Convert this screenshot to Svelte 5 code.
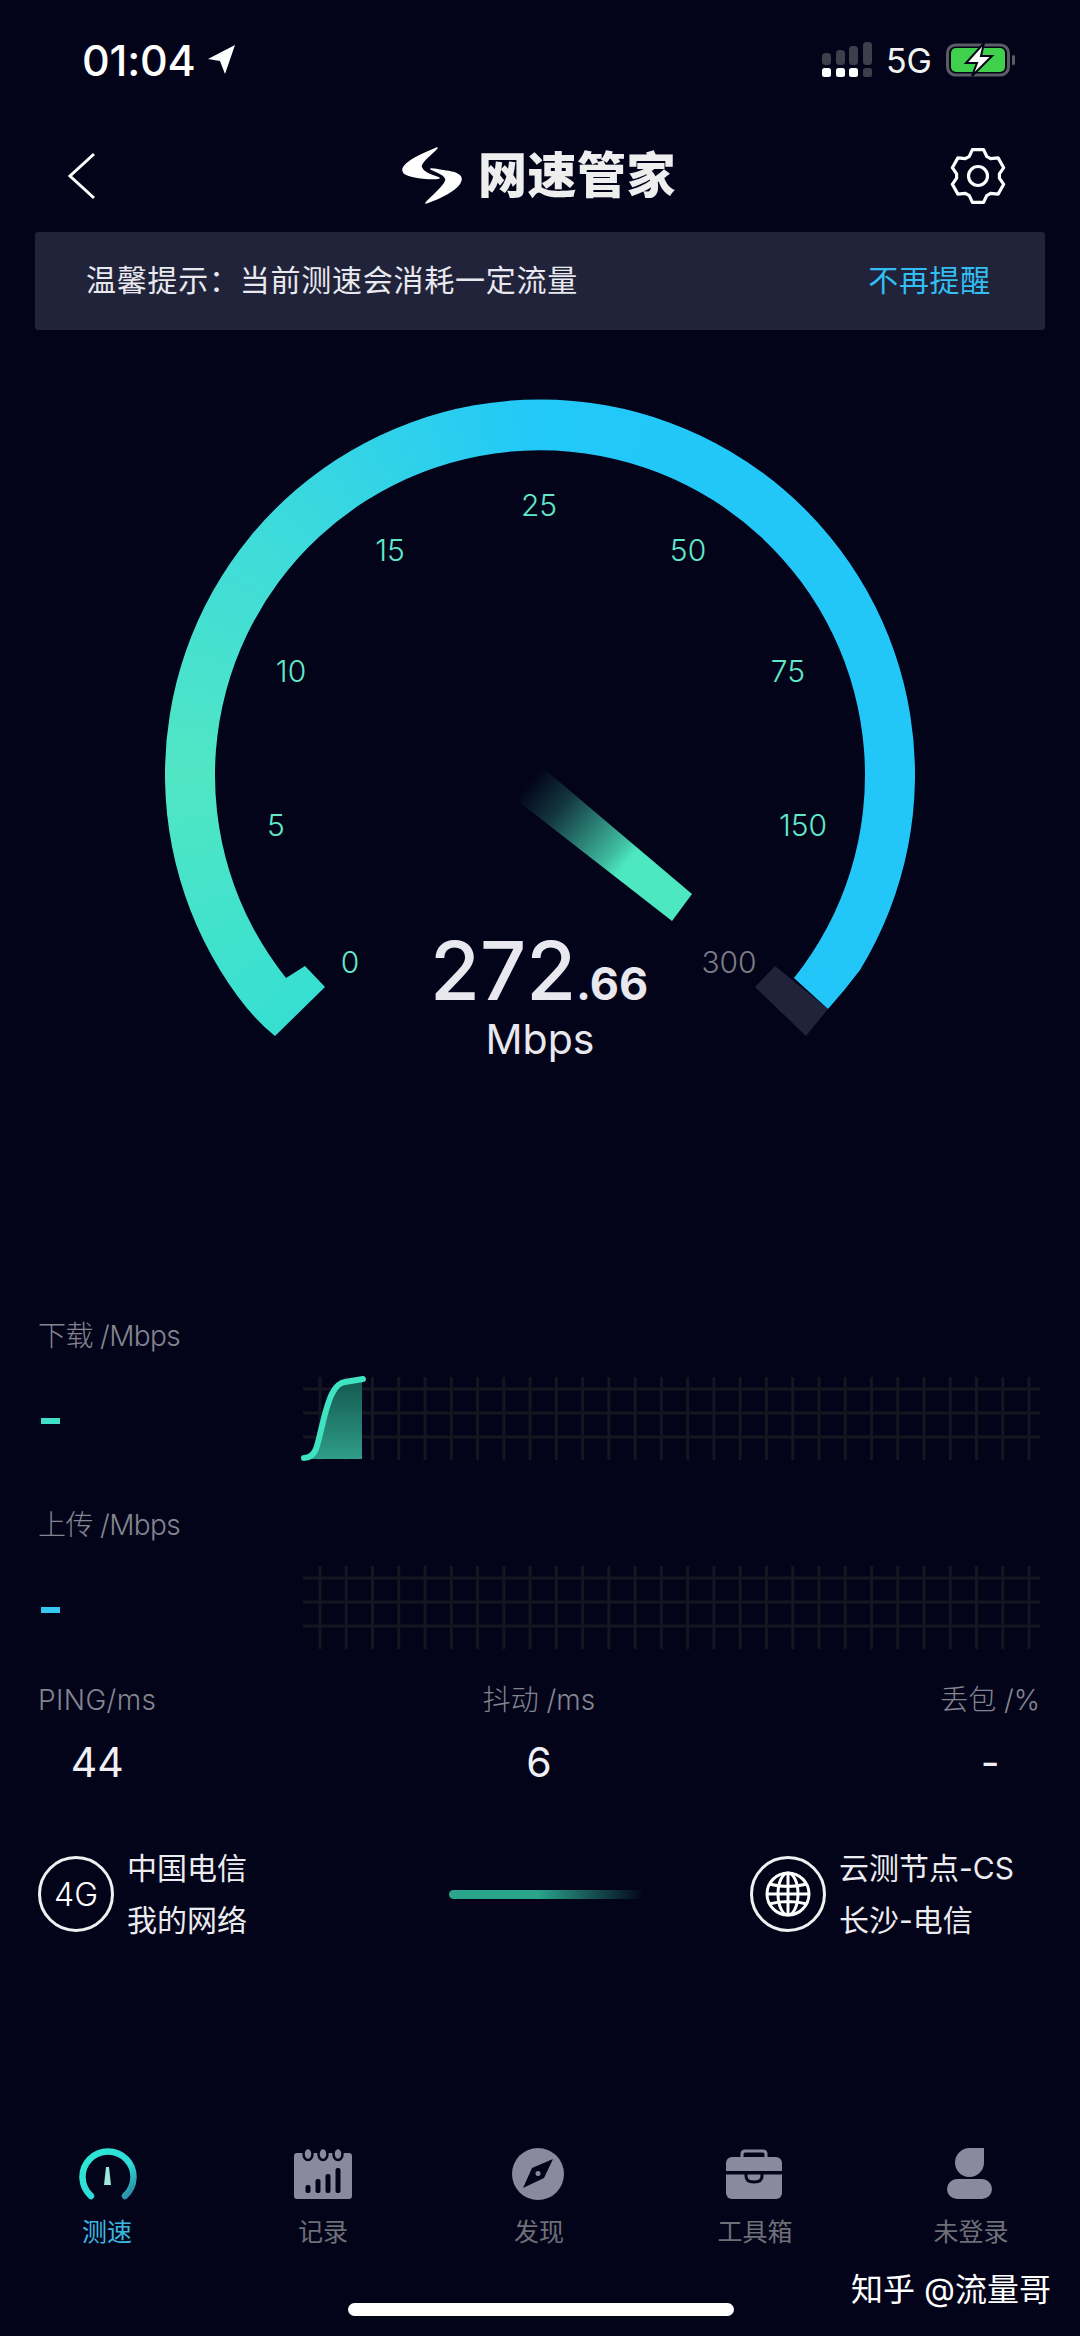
<script>
  const gridX = Array.from({ length: 28 }, (_, i) => 17 + i * 26.26);
  const gridY = [12, 36, 60];
  const ticks = [
    { t: '0', x: 350, y: 643 }, { t: '5', x: 276, y: 506 }, { t: '10', x: 291, y: 352 },
    { t: '15', x: 390, y: 231 }, { t: '25', x: 539, y: 186 }, { t: '50', x: 688, y: 231 },
    { t: '75', x: 788, y: 352 }, { t: '150', x: 803, y: 506 }
  ];
  const gearPts = [];
  for (let i = 0; i < 6; i++) {
    const a = (-90 + i * 60) * Math.PI / 180;
    const p = (r, d) => {
      const b = a + d * Math.PI / 180;
      return `${(30 + r * Math.cos(b)).toFixed(1)} ${(30 + r * Math.sin(b)).toFixed(1)}`;
    };
    gearPts.push(p(21.5, -24), p(27, -12), p(27, 12), p(21.5, 24));
  }
  const gear = 'M' + gearPts.join(' L') + ' Z';
  const bars = [
    { x: 12.5, y: 38 }, { x: 22.5, y: 32 }, { x: 32.5, y: 27 }, { x: 42.5, y: 21 }
  ];
  const signal = [
    { x: 0, y: 11, on: true }, { x: 14, y: 8, on: true }, { x: 27, y: 4, on: true }, { x: 41, y: 0, on: false }
  ];
</script>

<div class="page">
  <header class="status">
    <div class="time">
      <span>01:04</span>
      <svg width="28" height="30" viewBox="0 0 28 30"><path class="white" d="M27 0 L0 14 L12 16 L17 29 Z" /></svg>
    </div>
    <div class="sys">
      <svg width="50" height="36" viewBox="0 0 50 36">
        {#each signal as s}
          <rect class="dim" x={s.x} y={s.y} width="9" height={23 - s.y} rx="3.5" />
          <rect class={s.on ? 'white' : 'dim'} x={s.x} y="26" width="9" height="9" rx="2.5" />
        {/each}
      </svg>
      <span class="net">5G</span>
      <svg width="70" height="34" viewBox="0 0 70 34">
        <rect x="1.5" y="2" width="61" height="30" rx="8" fill="none" stroke="#5c5c64" stroke-width="3" />
        <rect x="5" y="5" width="54" height="24" rx="5" fill="#3fd04c" />
        <rect x="66" y="12" width="3" height="10" rx="1.5" fill="#5c5c64" />
        <path d="M38 0 L20 20 H31 L26 33 L46 13 H35 Z" fill="#fff" stroke="#03041a" stroke-width="2" />
      </svg>
    </div>
  </header>

  <nav class="nav">
    <svg width="30" height="48" viewBox="0 0 30 48"><path d="M27 2 L3 24 L27 46" fill="none" stroke="#fff" stroke-width="3" /></svg>
    <div class="brand">
      <svg width="62" height="58" viewBox="0 0 62 58">
        <path class="logo" d="M36 1 C24 6 4 14 2 22 C1 28 12 30 22 31 C28 31.5 34 32 38 31 C30 28 22 26 20 20 C19 14 30 8 36 1 Z" />
        <path class="logo" d="M25 56 C38 52 58 42 60 33 C61 27 52 25 44 24 C38 23 33 22 30 22 C36 25 44 27 45 32 C46 38 32 48 25 56 Z" />
      </svg>
      <span class="title">网速管家</span>
    </div>
    <svg width="60" height="60" viewBox="0 0 60 60">
      <path d={gear} fill="none" stroke="#fff" stroke-width="3.2" stroke-linejoin="round" />
      <circle cx="30" cy="30" r="9.5" fill="none" stroke="#fff" stroke-width="3.2" />
    </svg>
  </nav>

  <div class="banner">
    <span class="tip">温馨提示：当前测速会消耗一定流量</span>
    <span class="dismiss">不再提醒</span>
  </div>

  <section class="dial">
    <div class="ring"></div>
    <svg class="dial-art" width="1080" height="986" viewBox="0 0 1080 986">
      <defs>
        <linearGradient id="needle" gradientUnits="userSpaceOnUse" x1="530" y1="452" x2="682" y2="578">
          <stop offset="0" stop-color="#4de8c0" stop-opacity="0" />
          <stop offset="0.2" stop-color="#4de8c0" stop-opacity="0.22" />
          <stop offset="0.55" stop-color="#4de8c0" stop-opacity="0.8" />
          <stop offset="0.64" stop-color="#4de8c0" />
        </linearGradient>
      </defs>
      <polygon points="775,636 755,657 806,706 828,679" fill="#20233a" />
      <polygon points="692,564 672,591 514,468 543,438" fill="url(#needle)" />
      {#each ticks as k}
        <text class="tick" x={k.x} y={k.y} text-anchor="middle">{k.t}</text>
      {/each}
      <text class="tick off" x="729" y="643" text-anchor="middle">300</text>
      <text class="speed" x="430" y="670">272<tspan class="frac">.66</tspan></text>
      <text class="unit" x="540" y="724" text-anchor="middle">Mbps</text>
    </svg>
  </section>

  <section class="metric down">
    <div class="label">下载 /Mbps</div>
    <div class="metric-row">
      <i class="dash green"></i>
      <svg class="chart" width="737" height="83" viewBox="0 0 737 83">
        <defs>
          <linearGradient id="area" x1="0" y1="0" x2="0" y2="1">
            <stop offset="0" stop-color="#14574f" />
            <stop offset="1" stop-color="#2f9d88" />
          </linearGradient>
        </defs>
        {#each gridY as y}<line x1="0" x2="737" y1={y} y2={y} class="grid" />{/each}
        {#each gridX as x}<line x1={x} x2={x} y1="0" y2="83" class="grid" />{/each}
        <path d="M6 82 C10 80 12 76 13 72 C18 58 22 28 30 15 C34 8 37 6 42 5 C48 4 54 3 59 2 V82 Z" fill="url(#area)" />
        <path d="M1 81 C6 81 10 79 13 72 C18 58 22 28 30 15 C34 8 37 6 42 5 C48 4 54 3 60 2" fill="none" stroke="#3fe3c2" stroke-width="6" stroke-linecap="round" />
      </svg>
    </div>
  </section>

  <section class="metric up">
    <div class="label">上传 /Mbps</div>
    <div class="metric-row">
      <i class="dash blue"></i>
      <svg class="chart" width="737" height="83" viewBox="0 0 737 83">
        {#each gridY as y}<line x1="0" x2="737" y1={y} y2={y} class="grid" />{/each}
        {#each gridX as x}<line x1={x} x2={x} y1="0" y2="83" class="grid" />{/each}
      </svg>
    </div>
  </section>

  <section class="stats">
    <div class="stat first"><div class="label">PING/ms</div><div class="value">44</div></div>
    <div class="stat mid"><div class="label">抖动 /ms</div><div class="value">6</div></div>
    <div class="stat last"><div class="label">丢包 /%</div><div class="value">-</div></div>
  </section>

  <section class="network">
    <div class="endpoint">
      <div class="badge">4G</div>
      <div class="lines"><div>中国电信</div><div>我的网络</div></div>
    </div>
    <div class="progress"></div>
    <div class="endpoint">
      <div class="badge">
        <svg width="50" height="50" viewBox="0 0 50 50" fill="none" stroke="#fff" stroke-width="3">
          <circle cx="25" cy="25" r="21" />
          <ellipse cx="25" cy="25" rx="10" ry="21" />
          <path d="M25 4 V46 M6 15 Q25 20 44 15 M4 25 H46 M6 35 Q25 30 44 35" />
        </svg>
      </div>
      <div class="lines"><div>云测节点-CS</div><div>长沙-电信</div></div>
    </div>
  </section>

  <footer class="tabs">
    <div class="tab active">
      <svg width="60" height="54" viewBox="0 0 60 54">
        <defs>
          <linearGradient id="tabg" x1="0" y1="0" x2="1" y2="1">
            <stop offset="0" stop-color="#2ee8d4" />
            <stop offset="0.6" stop-color="#2edcd8" />
            <stop offset="1" stop-color="#2a84a0" />
          </linearGradient>
        </defs>
        <path d="M14 49 A25.5 25.5 0 1 1 48 49" fill="none" stroke="url(#tabg)" stroke-width="6.5" stroke-linecap="round" />
        <path d="M27 38 L29 20 H32 L34 38 Z" fill="#9fe6de" />
      </svg>
      <span>测速</span>
    </div>
    <div class="tab">
      <svg width="60" height="54" viewBox="0 0 60 54">
        <rect class="ico" x="1" y="6" width="58" height="46" rx="3" />
        <ellipse class="ico ring-top" cx="15" cy="7" rx="4.5" ry="6" />
        <ellipse class="ico ring-top" cx="30" cy="7" rx="4.5" ry="6" />
        <ellipse class="ico ring-top" cx="45" cy="7" rx="4.5" ry="6" />
        {#each bars as b}
          <rect class="cut" x={b.x} y={b.y} width="5" height={46 - b.y} rx="2" />
        {/each}
      </svg>
      <span>记录</span>
    </div>
    <div class="tab">
      <svg width="60" height="54" viewBox="0 0 60 54">
        <circle class="ico" cx="29" cy="27" r="26" />
        <polygon class="cut" points="44,12 35,31 14,41 23,21" />
        <circle class="ico" cx="29" cy="26.5" r="2.5" />
      </svg>
      <span>发现</span>
    </div>
    <div class="tab">
      <svg width="60" height="54" viewBox="0 0 60 54">
        <path d="M17 11 V7 Q17 4 20 4 H38 Q41 4 41 7 V11" fill="none" stroke="#8a8a9e" stroke-width="3" />
        <rect class="ico" x="1" y="10" width="56" height="42" rx="6" />
        <rect class="cut" x="1" y="24" width="56" height="3.5" />
        <path d="M21 27 V29 Q21 35 29 35 Q37 35 37 29 V27" fill="none" stroke="#03041a" stroke-width="3" />
      </svg>
      <span>工具箱</span>
    </div>
    <div class="tab">
      <svg width="60" height="54" viewBox="0 0 60 54">
        <path class="ico" d="M29 1 H43 V16 A14.5 14.5 0 1 1 29 1 Z" />
        <rect class="ico" x="6" y="32" width="45" height="20" rx="10" />
      </svg>
      <span>未登录</span>
    </div>
  </footer>

  <div class="home"></div>
  <div class="watermark">知乎 @流量哥</div>
</div>

<style>
  :global(body) {
    margin: 0;
    background: #03041a;
  }
  .page {
    position: relative;
    display: flex;
    flex-direction: column;
    width: 1080px;
    height: 2336px;
    overflow: hidden;
    background: #03041a;
    color: #fff;
    font-family: Inter, "Noto Sans CJK SC", sans-serif;
  }
  .white { fill: #fff; }
  .dim { fill: #3f3f4c; }
  .logo {
    fill: #fff;
    stroke: #fff;
    stroke-width: 1.5;
    stroke-linejoin: round;
  }

  .status {
    display: flex;
    justify-content: space-between;
    align-items: center;
    height: 120px;
    padding: 0 64px 0 82px;
    box-sizing: border-box;
  }
  .time {
    display: flex;
    align-items: center;
    gap: 12px;
    font-size: 43px;
    font-weight: 500;
    letter-spacing: -0.2px;
  }
  .sys {
    display: flex;
    align-items: center;
    gap: 14px;
  }
  .net {
    font-size: 34px;
    color: #f2f2f2;
  }

  .nav {
    display: flex;
    justify-content: space-between;
    align-items: center;
    height: 112px;
    padding: 0 72px 0 67px;
  }
  .brand {
    display: flex;
    align-items: center;
    gap: 15px;
    margin-left: 32px;
  }
  .title {
    font-size: 49px;
    font-weight: 900;
    line-height: 60px;
    letter-spacing: 0.5px;
    color: #eeeeee;
  }

  .banner {
    display: flex;
    justify-content: space-between;
    align-items: center;
    height: 98px;
    margin: 0 35px;
    padding: 0 54px 6px 51px;
    box-sizing: border-box;
    border-radius: 3px;
    background: #20233a;
    font-size: 30px;
    font-weight: 400;
  }
  .tip { color: #e8e8ee; letter-spacing: 0.75px; }
  .dismiss { color: #33bdf0; letter-spacing: 0.7px; }

  .dial {
    position: relative;
    height: 986px;
  }
  .ring {
    position: absolute;
    inset: 0;
    background: conic-gradient(from 0deg at 540px 445px,
      #22c8f8 0deg, #22c6f8 135deg, #22c6f8 170deg,
      #36dfd2 225deg, #50e6c4 270deg, #3cdadc 315deg, #22c8f8 360deg);
    clip-path: path("M275 706 L325 657 L305 636 L286 648 A325 325 0 1 1 794 648 L828 679 Q845 660 860 640 A375 375 0 1 0 220 640 Q247 684 275 706 Z");
  }
  .dial-art {
    position: absolute;
    inset: 0;
  }
  .tick {
    font-size: 30px;
    font-weight: 300;
    fill: #62e8c8;
  }
  .tick.off { fill: #7c7c84; }
  .speed {
    font-size: 81px;
    font-weight: 500;
    fill: #e8e8ee;
  }
  .frac {
    font-size: 45px;
    font-weight: 700;
  }
  .unit {
    font-size: 41px;
    fill: #e8e8ee;
  }

  .label {
    height: 40px;
    line-height: 40px;
    font-size: 28px;
    font-weight: 300;
    color: #85858f;
    white-space: nowrap;
  }
  .metric {
    padding-left: 38px;
  }
  .metric .label { letter-spacing: -0.6px; }
  .first .label { letter-spacing: 0.4px; }
  .down { margin-bottom: 45px; }
  .up { margin-bottom: 31px; }
  .metric-row {
    display: flex;
    align-items: center;
    margin-top: 21px;
  }
  .dash {
    display: block;
    width: 19px;
    height: 6px;
    margin: 5px 0 0 3px;
  }
  .green { background: #3fe0c8; }
  .blue { background: #35c8f0; }
  .chart {
    margin-left: 243px;
    overflow: visible;
  }
  .grid {
    stroke: #15161f;
    stroke-width: 3;
  }

  .stats {
    display: grid;
    grid-template-columns: repeat(3, 1fr);
    padding: 0 40px 0 38px;
    text-align: center;
  }
  .first { justify-self: start; }
  .mid { justify-self: center; }
  .last { justify-self: end; }
  .value {
    margin-top: 17px;
    line-height: 50px;
    font-size: 41px;
    color: #f0f0f4;
  }

  .network {
    display: grid;
    grid-template-columns: 411px 195px auto;
    align-items: center;
    margin-top: 55px;
    padding-left: 38px;
  }
  .network .endpoint:last-child {
    margin-left: 106px;
  }
  .endpoint {
    display: flex;
    align-items: center;
    gap: 13px;
  }
  .badge {
    display: flex;
    justify-content: center;
    align-items: center;
    width: 76px;
    height: 76px;
    box-sizing: border-box;
    border: 3px solid #f0f0f0;
    border-radius: 50%;
    font-size: 32px;
    font-weight: 300;
  }
  .lines {
    line-height: 52px;
    font-size: 30px;
    font-weight: 400;
    color: #ececf0;
  }
  .progress {
    height: 9px;
    border-radius: 5px;
    background: linear-gradient(90deg, #2aa58c 0%, #2aa58c 45%, rgba(42, 165, 140, 0) 100%);
  }

  .tabs {
    display: grid;
    grid-template-columns: repeat(5, 216px);
    margin: 201px 0 0 -1px;
  }
  .tab {
    display: flex;
    flex-direction: column;
    align-items: center;
    gap: 16px;
    font-size: 25px;
    line-height: 30px;
    font-weight: 400;
    color: #6f6f78;
  }
  .tab.active { color: #3cb8e0; }
  .ico { fill: #8a8a9e; }
  .ring-top {
    stroke: #03041a;
    stroke-width: 2.5;
  }
  .cut { fill: #03041a; }

  .home {
    width: 386px;
    height: 13px;
    margin: 56px 0 0 348px;
    border-radius: 7px;
    background: #fff;
  }
  .watermark {
    position: absolute;
    top: 2270px;
    left: 851px;
    font-size: 32px;
    line-height: 40px;
    white-space: nowrap;
    color: #fff;
  }
</style>
